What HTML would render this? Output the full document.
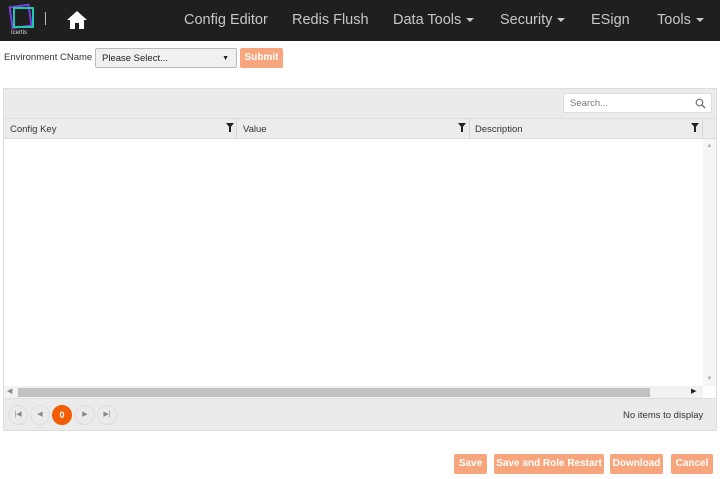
<!DOCTYPE html><html><head><style>
*{box-sizing:border-box;margin:0;padding:0}
body{width:720px;height:479px;background:#fff;font-family:"Liberation Sans",sans-serif;position:relative;overflow:hidden}
.nav{position:absolute;left:0;top:0;width:720px;height:41px;background:#1f1f1f}
.nav span{position:absolute;top:12px;color:#c8c8c8;font-size:14.5px}
.car{display:inline-block;border-left:4px solid transparent;border-right:4px solid transparent;border-top:4px solid #c8c8c8;vertical-align:middle;margin-left:5px}
.abs{position:absolute}
.btn{position:absolute;background:#f7a57c;color:#fff;font-size:10px;font-weight:bold;border-radius:2px;text-align:center;line-height:20px;height:20px}
.fil{position:absolute;top:4px;width:0;height:0;border-left:4px solid transparent;border-right:4px solid transparent;border-top:5px solid #222}
.fil:after{content:"";position:absolute;left:-1px;top:-1px;width:2px;height:5px;background:#222}
.pb{position:absolute;top:405px;width:20px;height:20px;border-radius:50%;border:1px solid #ddd;font-size:7px;color:#888;text-align:center;line-height:18px}
</style></head><body>
<div class="nav">
<svg class="abs" style="left:7px;top:3px" width="28" height="26"><rect x="4" y="3" width="19" height="21" fill="none" stroke="#7b3fe0" stroke-width="2" transform="rotate(-8 13 13)"/><rect x="7" y="5" width="19" height="19" fill="none" stroke="#1fc7b0" stroke-width="2"/></svg>
<div class="abs" style="left:11px;top:30px;color:#ddd;font-size:6px">Icertis</div>
<div class="abs" style="left:45px;top:12px;width:1px;height:13px;background:#bbb"></div>
<svg class="abs" style="left:66px;top:10px" width="22" height="20"><path d="M11 1 L21 10 L18 10 L18 19 L13 19 L13 13 L9 13 L9 19 L4 19 L4 10 L1 10 Z" fill="#fff"/></svg>
<span style="left:184px">Config Editor</span>
<span style="left:292px">Redis Flush</span>
<span style="left:393px">Data Tools<i class="car"></i></span>
<span style="left:500px">Security<i class="car"></i></span>
<span style="left:591px">ESign</span>
<span style="left:657px">Tools<i class="car"></i></span>
</div>
<div class="abs" style="left:4px;top:52px;font-size:9.5px;color:#333">Environment CName</div>
<div class="abs" style="left:95px;top:48px;width:142px;height:20px;border:1px solid #bbb;border-radius:2px;background:#f0f0f0;font-size:9.5px;color:#222;padding:4px 6px">Please Select...<span style="position:absolute;right:7px;top:6px;font-size:7px">▼</span></div>
<div class="btn" style="left:240px;top:48px;width:43px;">Submit</div>
<div class="abs" style="left:3px;top:88px;width:714px;height:343px;border:1px solid #ddd;background:#ebebeb"></div>
<div class="abs" style="left:563px;top:93px;width:149px;height:20px;background:#fff;border:1px solid #ddd;border-radius:2px;font-size:9.5px;color:#777;padding:4px 6px">Search...
<svg style="position:absolute;right:5px;top:4px" width="11" height="11"><circle cx="4.5" cy="4.5" r="3.3" fill="none" stroke="#777" stroke-width="1.2"/><line x1="7" y1="7" x2="10" y2="10" stroke="#777" stroke-width="1.5"/></svg></div>
<div class="abs" style="left:4px;top:118px;width:712px;height:21px;background:#ececec;border-top:1px solid #ddd;border-bottom:1px solid #ddd;font-size:9.5px;color:#333">
<div class="abs" style="left:6px;top:5px">Config Key</div><div class="fil" style="left:222px"></div>
<div class="abs" style="left:232px;top:0;width:1px;height:20px;background:#d5d5d5"></div>
<div class="abs" style="left:239px;top:5px">Value</div><div class="fil" style="left:454px"></div>
<div class="abs" style="left:465px;top:0;width:1px;height:20px;background:#d5d5d5"></div>
<div class="abs" style="left:471px;top:5px">Description</div><div class="fil" style="left:687px"></div>
<div class="abs" style="left:698px;top:0;width:1px;height:20px;background:#d5d5d5"></div>
</div>
<div class="abs" style="left:4px;top:139px;width:712px;height:259px;background:#fff"></div>
<div class="abs" style="left:703px;top:139px;width:13px;height:247px;background:#f5f5f5;font-size:6px;color:#aaa;text-align:center;padding-top:4px">▲<div style="position:absolute;bottom:4px;width:13px">▼</div></div>
<div class="abs" style="left:4px;top:386px;width:699px;height:12px;background:#f2f2f2"></div>
<div class="abs" style="left:18px;top:388px;width:632px;height:9px;background:#c1c1c1"></div>
<div class="abs" style="left:7px;top:387px;font-size:7px;color:#888">◀</div>
<div class="abs" style="left:691px;top:387px;font-size:7px;color:#222">▶</div>
<div class="abs" style="left:4px;top:398px;width:712px;height:1px;background:#ddd"></div>
<div class="pb" style="left:8px">|◀</div><div class="pb" style="left:30px">◀</div>
<div class="pb" style="left:52px;background:#f25c05;border-color:#f25c05;color:#fff;font-size:9px;font-weight:bold">0</div>
<div class="pb" style="left:75px">▶</div><div class="pb" style="left:97px">▶|</div>
<div class="abs" style="left:623px;top:410px;font-size:9.5px;color:#333">No items to display</div>
<div class="btn" style="left:454px;top:454px;width:33px">Save</div>
<div class="btn" style="left:494px;top:454px;width:110px">Save and Role Restart</div>
<div class="btn" style="left:610px;top:454px;width:53px">Download</div>
<div class="btn" style="left:671px;top:454px;width:42px">Cancel</div>
</body></html>
